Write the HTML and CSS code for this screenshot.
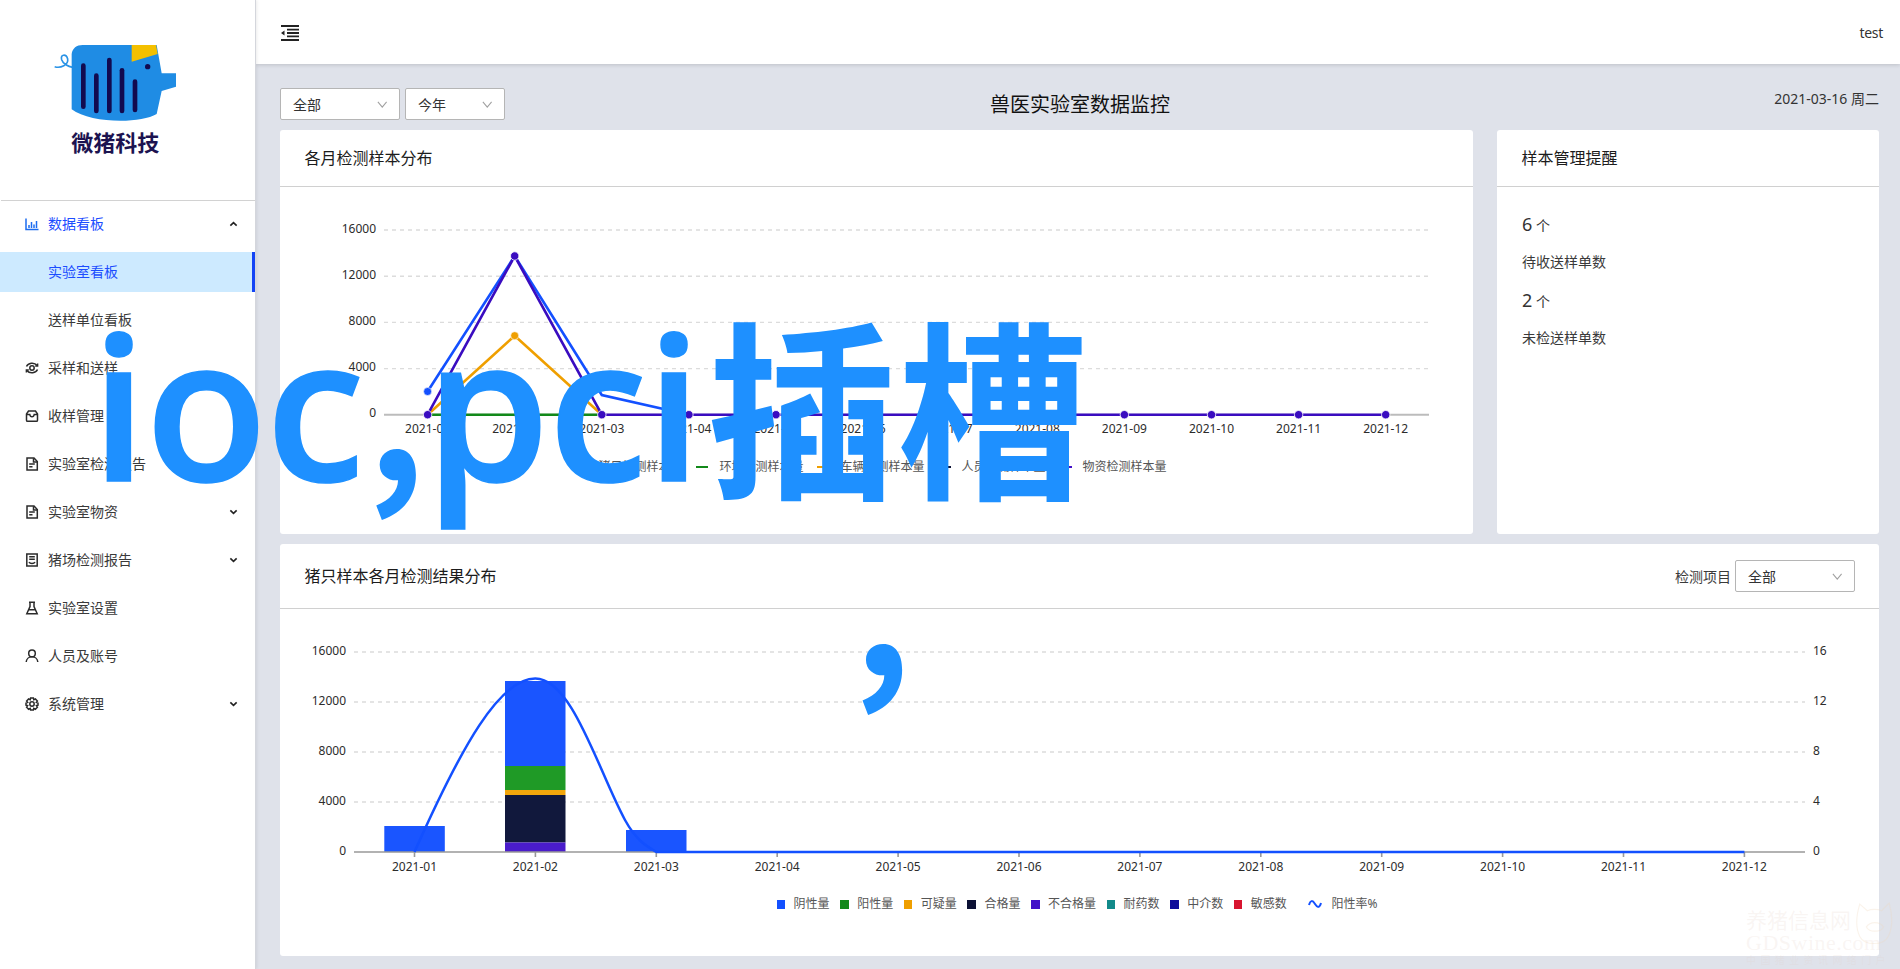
FILE: index.html
```html
<!DOCTYPE html>
<html lang="zh-CN">
<head>
<meta charset="utf-8">
<title>兽医实验室数据监控</title>
<link rel="stylesheet" href="styles.css">
</head>
<body>
<div class="app">
  <aside class="sidebar">
    <div class="logo">
      <svg class="logo-svg" viewBox="0 0 480 390" width="160" height="130">
        <path class="logo-tail" d="M44 110C62 116 86 104 83 87C79 71 60 72 65 89C69 101 84 110 98 112"/>
        <path class="logo-body" d="M95 72C97 55 110 45 128 45H350L365 130H408V170L365 183L350 252C300 282 150 280 95 238Z"/>
        <path class="logo-ear" d="M275 45H348L353 72L275 95Z"/>
        <circle class="logo-eye" cx="323" cy="110" r="8"/>
        <g class="logo-bars">
          <path d="M130 107V230"/><path d="M169 137V243"/><path d="M208 90V243"/><path d="M246 121V243"/><path d="M285 155V240"/>
        </g>
        <text class="logo-text" x="94" y="362">微猪科技</text>
      </svg>
    </div>
    <nav class="menu">
      <div class="menu-item active">
        <svg class="ico" viewBox="0 0 14 14"><path d="M1 1.5V12.5H13.5" /><path d="M4 11V8M6.5 11V5M9 11V7.5M11.5 11V4"/></svg>
        <span class="menu-label">数据看板</span>
        <svg class="chev dark" viewBox="0 0 10 6"><path d="M1.5 4.8L5 1.5L8.5 4.8"/></svg>
      </div>
      <div class="submenu">
        <div class="sub-item selected">实验室看板</div>
        <div class="sub-item">送样单位看板</div>
      </div>
      <div class="menu-item">
        <svg class="ico" viewBox="0 0 14 14"><circle cx="7" cy="7" r="2.2"/><path d="M1.5 5.5C3 2 9 .8 12.2 4.5M12.5 8.5C11 12 5 13.2 1.8 9.5"/><path d="M12.6 2.6V5H10.2M1.4 11.4V9H3.8"/></svg>
        <span class="menu-label">采样和送样</span>
      </div>
      <div class="menu-item">
        <svg class="ico" viewBox="0 0 14 14"><path d="M3.5 2H10.5L12.5 5V11.2C12.5 11.8 12 12.3 11.4 12.3H2.6C2 12.3 1.5 11.8 1.5 11.2V5Z"/><path d="M1.5 5.5H4.8C5 7 6 7.8 7 7.8C8 7.8 9 7 9.2 5.5H12.5"/></svg>
        <span class="menu-label">收样管理</span>
      </div>
      <div class="menu-item">
        <svg class="ico" viewBox="0 0 14 14"><path d="M2 1H9L12.3 4.5V13H2Z"/><path d="M8.5 1.2V5H12.2M4.2 7H9.8M4.2 9.8H7.5"/></svg>
        <span class="menu-label">实验室检测报告</span>
      </div>
      <div class="menu-item">
        <svg class="ico" viewBox="0 0 14 14"><path d="M2 1H9L12.3 4.5V13H2Z"/><path d="M8.5 1.2V5H12.2M4.2 7H9.8M4.2 9.8H7.5"/></svg>
        <span class="menu-label">实验室物资</span>
        <svg class="chev dark" viewBox="0 0 10 6"><path d="M1.5 1.2L5 4.5L8.5 1.2"/></svg>
      </div>
      <div class="menu-item">
        <svg class="ico" viewBox="0 0 14 14"><path d="M1.8 1H12.2V13H1.8Z"/><path d="M4.2 3.8H9.8M4.2 6.3H9.8M4 9C5 11 9 11 10 9"/></svg>
        <span class="menu-label">猪场检测报告</span>
        <svg class="chev dark" viewBox="0 0 10 6"><path d="M1.5 1.2L5 4.5L8.5 1.2"/></svg>
      </div>
      <div class="menu-item">
        <svg class="ico" viewBox="0 0 14 14"><path d="M4 1.2H10M5 1.2V5.5L1.8 12.8H12.2L9 5.5V1.2M3.6 8.8H10.4"/></svg>
        <span class="menu-label">实验室设置</span>
      </div>
      <div class="menu-item">
        <svg class="ico" viewBox="0 0 14 14"><circle cx="7" cy="4.4" r="3.3"/><path d="M1.2 13C1.4 9.8 4 7.8 7 7.8C10 7.8 12.6 9.8 12.8 13"/></svg>
        <span class="menu-label">人员及账号</span>
      </div>
      <div class="menu-item">
        <svg class="ico" viewBox="0 0 14 14"><circle cx="7" cy="7" r="2.2"/><path d="M5.6 1H8.4L8.8 2.7L10.4 2L12.4 4L11.4 5.4L13 6V8.2L11.4 8.6L12.4 10.2L10.4 12.2L8.8 11.3L8.4 13H5.6L5.2 11.3L3.6 12.2L1.6 10.2L2.6 8.6L1 8.2V6L2.6 5.4L1.6 4L3.6 2L5.2 2.7Z"/></svg>
        <span class="menu-label">系统管理</span>
        <svg class="chev dark" viewBox="0 0 10 6"><path d="M1.5 1.2L5 4.5L8.5 1.2"/></svg>
      </div>
    </nav>
  </aside>

  <div class="main">
    <header class="topbar">
      <svg class="fold" viewBox="0 0 18 16"><path d="M0 1H18M6 4.7H18M6 8H18M6 11.3H18M0 15H18"/><path class="fold-tri" d="M3.5 5.5V10.5L0 8Z"/></svg>
      <span class="user">test</span>
    </header>
    <main class="content">
      <div class="toolbar">
        <div class="filters">
          <div class="select w120"><span>全部</span><svg class="arrow" viewBox="0 0 12 8"><path d="M1 1L6 7L11 1"/></svg></div>
          <div class="select w100"><span>今年</span><svg class="arrow" viewBox="0 0 12 8"><path d="M1 1L6 7L11 1"/></svg></div>
        </div>
        <h1 class="page-title">兽医实验室数据监控</h1>
        <div class="date">2021-03-16 周二</div>
      </div>

      <div class="row-top">
        <section class="card">
          <div class="card-head short"><h2 class="card-title">各月检测样本分布</h2></div>
          <div class="chart-wrap">
            <svg class="chart chart-a" viewBox="280 187 1193 263">
              <g class="grid">
                <path d="M384 230H1429M384 276.2H1429M384 322.4H1429M384 368.6H1429"/>
              </g>
              <path class="axis light" d="M384 414.7H1429"/>
              <g class="ylabels">
                <text x="376" y="233">16000</text><text x="376" y="279">12000</text><text x="376" y="325">8000</text><text x="376" y="371">4000</text><text x="376" y="417">0</text>
              </g>
              <g class="xlabels">
                <text x="427.6" y="433">2021-01</text><text x="514.7" y="433">2021-02</text><text x="601.8" y="433">2021-03</text><text x="688.9" y="433">2021-04</text><text x="776" y="433">2021-05</text><text x="863.1" y="433">2021-06</text><text x="950.2" y="433">2021-07</text><text x="1037.3" y="433">2021-08</text><text x="1124.4" y="433">2021-09</text><text x="1211.5" y="433">2021-10</text><text x="1298.6" y="433">2021-11</text><text x="1385.7" y="433">2021-12</text>
              </g>
              <path class="ln green" d="M427.6 414.7H601.8"/>
              <path class="ln orange" d="M427.6 414.7L514.7 335.7L601.8 414.7"/>
              <circle class="dot-orange" cx="514.7" cy="335.7" r="4"/>
              <path class="ln blue" d="M427.6 391.5L514.7 256L601.8 395L688.9 414.7"/>
              <circle class="dot-blue" cx="427.6" cy="391.5" r="4"/>
              <path class="ln purple" d="M427.6 414.7L514.7 256L601.8 414.7H1385.7"/>
              <g class="dots">
                <circle cx="427.6" cy="414.7" r="4.2"/><circle cx="514.7" cy="256" r="4.2"/><circle cx="601.8" cy="414.7" r="4.2"/><circle cx="688.9" cy="414.7" r="4.2"/><circle cx="776" cy="414.7" r="4.2"/><circle cx="863.1" cy="414.7" r="4.2"/><circle cx="950.2" cy="414.7" r="4.2"/><circle cx="1037.3" cy="414.7" r="4.2"/><circle cx="1124.4" cy="414.7" r="4.2"/><circle cx="1211.5" cy="414.7" r="4.2"/><circle cx="1298.6" cy="414.7" r="4.2"/><circle cx="1385.7" cy="414.7" r="4.2"/>
              </g>
            </svg>
            <div class="legend legend-a">
              <div class="lg"><i class="mark-line c-blue"></i>猪只检测样本量</div>
              <div class="lg"><i class="mark-line c-green"></i>环境检测样本量</div>
              <div class="lg"><i class="mark-line c-orange"></i>车辆检测样本量</div>
              <div class="lg"><i class="mark-line c-navy"></i>人员检测样本量</div>
              <div class="lg"><i class="mark-line c-purple"></i>物资检测样本量</div>
            </div>
          </div>
        </section>
        <section class="card">
          <div class="card-head short"><h2 class="card-title">样本管理提醒</h2></div>
          <div class="stats">
            <div class="stat-num"><b>6</b> 个</div>
            <div class="stat-label">待收送样单数</div>
            <div class="stat-num"><b>2</b> 个</div>
            <div class="stat-label">未检送样单数</div>
          </div>
        </section>
      </div>

      <section class="card card-wide">
        <div class="card-head tall">
          <h2 class="card-title">猪只样本各月检测结果分布</h2>
          <div class="head-filter">
            <span class="filter-label">检测项目</span>
            <div class="select w120"><span>全部</span><svg class="arrow" viewBox="0 0 12 8"><path d="M1 1L6 7L11 1"/></svg></div>
          </div>
        </div>
        <svg class="chart chart-b" viewBox="280 609 1599 272">
          <g class="grid">
            <path d="M354 652H1805M354 702H1805M354 752H1805M354 802H1805"/>
          </g>
          <g class="ylabels">
            <text x="346" y="655">16000</text><text x="346" y="705">12000</text><text x="346" y="755">8000</text><text x="346" y="805">4000</text><text x="346" y="855">0</text>
          </g>
          <g class="rlabels">
            <text x="1813" y="655">16</text><text x="1813" y="705">12</text><text x="1813" y="755">8</text><text x="1813" y="805">4</text><text x="1813" y="855">0</text>
          </g>
          <g class="bars">
            <rect class="b-blue" x="384.3" y="826" width="60.5" height="26"/>
            <rect class="b-blue" x="505" y="681" width="60.5" height="85"/>
            <rect class="b-green" x="505" y="766" width="60.5" height="24"/>
            <rect class="b-orange" x="505" y="790" width="60.5" height="5"/>
            <rect class="b-navy" x="505" y="795" width="60.5" height="47.5"/>
            <rect class="b-purple" x="505" y="842.5" width="60.5" height="9.5"/>
            <rect class="b-blue" x="626" y="830" width="60.5" height="22"/>
          </g>
          <path class="axis dark" d="M354 852H1805M414.5 852V857M535.4 852V857M656.3 852V857M777.2 852V857M898.1 852V857M1019 852V857M1139.9 852V857M1260.8 852V857M1381.7 852V857M1502.6 852V857M1623.5 852V857M1744.4 852V857"/>
          <path class="ln curve" d="M414.5 852C462 745 500 678.5 535.3 678.5C572 678.5 598 770 625 820C636 840 646 846 656.3 852H1744.4"/>
          <g class="xlabels">
            <text x="414.5" y="871">2021-01</text><text x="535.4" y="871">2021-02</text><text x="656.3" y="871">2021-03</text><text x="777.2" y="871">2021-04</text><text x="898.1" y="871">2021-05</text><text x="1019" y="871">2021-06</text><text x="1139.9" y="871">2021-07</text><text x="1260.8" y="871">2021-08</text><text x="1381.7" y="871">2021-09</text><text x="1502.6" y="871">2021-10</text><text x="1623.5" y="871">2021-11</text><text x="1744.4" y="871">2021-12</text>
          </g>
        </svg>
        <div class="legend legend-b">
          <div class="lg"><i class="mark-sq c-blue"></i>阴性量</div>
          <div class="lg"><i class="mark-sq c-green"></i>阳性量</div>
          <div class="lg"><i class="mark-sq c-orange"></i>可疑量</div>
          <div class="lg"><i class="mark-sq c-navy"></i>合格量</div>
          <div class="lg"><i class="mark-sq c-purple"></i>不合格量</div>
          <div class="lg"><i class="mark-sq c-teal"></i>耐药数</div>
          <div class="lg"><i class="mark-sq c-indigo"></i>中介数</div>
          <div class="lg"><i class="mark-sq c-red"></i>敏感数</div>
          <div class="lg lg-rate"><svg class="mark-wave" viewBox="0 0 14 10"><path d="M1 6C2.5 1 4.5 1 7 5C9.5 9 11.5 9 13 4"/></svg>阳性率%</div>
        </div>
      </section>
    </main>
  </div>
</div>

<div class="banner"><span class="banner-latin">ioc</span><span class="banner-punct">,</span><span class="banner-latin">pci</span><span class="banner-cjk">插槽</span></div>
<div class="banner-comma">,</div>

<div class="watermark">
  <svg class="wm-cat" viewBox="0 0 40 48"><path d="M5 2L13 9C17 7 24 7 28 9L36 1C39 12 40 26 35 36C30 46 10 46 5 36C0 26 2 12 5 2Z"/><path d="M12 26C16 20 26 20 30 26C27 32 15 32 12 26Z"/></svg>
  <div class="wm-a">养猪信息网</div>
  <div class="wm-b">GDSwine.com</div>
  <div class="wm-c">中国猪业资讯网络门户</div>
</div>
</body>
</html>
```

FILE: styles.css
```css
* { box-sizing: border-box; }
html, body { margin: 0; height: 100%; }
body {
  width: 1900px;
  height: 969px;
  overflow: hidden;
  position: relative;
  font-family: "Noto Sans", "Noto Sans CJK SC", sans-serif;
  font-size: 14px;
  color: #333;
  background: #dfe2ea;
}
.app { display: flex; width: 1900px; height: 969px; }

/* sidebar */
.sidebar {
  width: 256px;
  flex: none;
  background: #fff;
  border-right: 1px solid #d4d6dc;
  box-shadow: 1px 0 3px rgba(0,0,0,.08);
  position: relative;
  z-index: 2;
}
.logo {
  height: 201px;
  padding: 30px 0 0 40px;
  border-bottom: 1px solid #d2d2d2;
  margin-left: 1px;
}
.logo-svg { display: block; margin-left: -1px; }
.logo-tail { fill: none; stroke: #2a93e6; stroke-width: 5; }
.logo-body { fill: #1f8ce4; }
.logo-ear { fill: #f4c000; }
.logo-eye { fill: #120a4f; }
.logo-bars path { stroke: #120a4f; stroke-width: 14; stroke-linecap: round; fill: none; }
.logo-text {
  font-family: "Noto Sans CJK SC", sans-serif;
  font-weight: 700;
  font-size: 66px;
  fill: #1c1350;
}
.menu { margin-top: -1px; }
.menu-item {
  height: 48px;
  display: flex;
  align-items: center;
  padding-left: 24.5px;
  position: relative;
  color: #3a3a3a;
}
.menu-item.active { color: #1c4dff; }
.ico {
  width: 14px;
  height: 14px;
  flex: none;
  margin-right: 9.5px;
  fill: none;
  stroke: #2b2b2b;
  stroke-width: 1.5;
}
.active .ico { stroke: #1c6cf0; }
.menu-label { line-height: 20px; }
.chev {
  position: absolute;
  left: 229px;
  top: 21px;
  width: 9px;
  height: 6px;
  fill: none;
  stroke: #222;
  stroke-width: 1.8;
}
.submenu { padding: 4px 0; display: flex; flex-direction: column; gap: 8px; }
.sub-item {
  height: 40px;
  line-height: 40px;
  padding-left: 48px;
  color: #3a3a3a;
}
.sub-item.selected {
  background: #cdeaff;
  color: #1c4dff;
  border-right: 3px solid #1343f5;
}

/* main */
.main { flex: 1; min-width: 0; display: flex; flex-direction: column; }
.topbar {
  height: 64px;
  flex: none;
  background: #fff;
  box-shadow: 0 1px 4px rgba(0,0,0,.15);
  display: flex;
  align-items: center;
  justify-content: space-between;
  padding: 0 17px 0 25px;
  position: relative;
  z-index: 1;
}
.fold { width: 18px; height: 16px; margin-top: 2px; fill: none; stroke: #222; stroke-width: 1.8; }
.fold-tri { fill: #222; stroke: none; }
.user { font-size: 14px; letter-spacing: -.3px; color: #333; }
.content { padding: 24px 20px 0 24px; flex: 1; }
.toolbar {
  display: grid;
  grid-template-columns: 1fr auto 1fr;
  height: 42px;
}
.filters { display: flex; gap: 5px; }
.select {
  height: 32px;
  background: #fff;
  border: 1px solid #b5b5b5;
  border-radius: 2px;
  display: flex;
  align-items: center;
  justify-content: space-between;
  padding: 0 12px;
  color: #333;
  font-size: 14px;
}
.w120 { width: 120px; }
.w100 { width: 100px; }
.arrow { width: 10.5px; height: 7px; fill: none; stroke: #a0a0a0; stroke-width: 1.2; }
.page-title {
  margin: 0;
  font-size: 20px;
  font-weight: 400;
  line-height: 34px;
  color: #111;
}
.date { text-align: right; font-size: 14px; line-height: 22px; color: #333; padding-right: 1px; }
.row-top { display: grid; grid-template-columns: 1193px 382px; gap: 24px; height: 404px; }
.card { background: #fff; border-radius: 3px; min-width: 0; }
.card-head {
  display: flex;
  align-items: center;
  justify-content: space-between;
  padding: 0 24px 2px 24.5px;
  border-bottom: 1px solid #d0d0d0;
}
.card-head.short { height: 57px; }
.card-head.tall { height: 65px; }
.card-title { margin: 0; font-size: 16px; font-weight: 400; color: #1c1c1c; }
.chart { display: block; }
.chart-a { width: 1193px; height: 263px; }
.chart-b { width: 1599px; height: 272px; }
.chart text { font-size: 12px; fill: #2c2c2c; }
.grid path { fill: none; stroke: #dcdcdc; stroke-width: 1.4; stroke-dasharray: 4 4; }
.axis { fill: none; }
.axis.light { stroke: #bcbcbc; stroke-width: 2; }
.axis.dark { stroke: #999; stroke-width: 1.6; }
.ylabels text { text-anchor: end; }
.xlabels text { text-anchor: middle; }
.ln { fill: none; stroke-width: 2.6; }
.ln.green { stroke: #12891a; }
.ln.orange { stroke: #ef9f00; }
.ln.blue { stroke: #1350ff; }
.ln.purple { stroke: #3a0cc0; }
.ln.curve { stroke: #1350ff; stroke-width: 2.5; }
.dot-orange { fill: #ef9f00; stroke: #fff; stroke-width: .6; }
.dot-blue { fill: #1350ff; stroke: #fff; stroke-width: .6; }
.dots circle { fill: #3a0cc0; stroke: #fff; stroke-width: .8; }
.b-blue { fill: #1a55ff; }
.b-green { fill: #1f9a26; }
.b-orange { fill: #f2a60c; }
.b-navy { fill: #11183c; }
.b-purple { fill: #4a1ccb; }
.legend {
  display: flex;
  justify-content: center;
  align-items: center;
  color: #555;
  font-size: 12px;
  line-height: 18px;
}
.legend-a { gap: 14px; margin-top: 8px; padding-right: 11px; }
.legend-b { gap: 10.6px; margin-top: 14px; padding-right: 5px; }
.lg { display: flex; align-items: center; white-space: nowrap; }
.mark-line { width: 12px; height: 2.5px; margin-right: 11px; flex: none; }
.mark-sq { width: 8.5px; height: 9px; margin-right: 8.5px; flex: none; }
.mark-wave { width: 14px; height: 10px; margin-right: 9px; fill: none; stroke: #1350ff; stroke-width: 2; }
.lg-rate { margin-left: 11px; }
.c-blue { background: #1350ff; }
.c-green { background: #12891a; }
.c-orange { background: #ef9f00; }
.c-navy { background: #0c1135; }
.c-purple { background: #4210c8; }
.c-teal { background: #128a8a; }
.c-indigo { background: #0e0c9a; }
.c-red { background: #d81530; }
.stats { padding: 18px 25px 0; }
.stat-num { font-size: 14px; line-height: 38px; height: 38px; color: #333; }
.stat-num b { font-size: 18px; font-weight: 400; }
.stat-label { font-size: 14px; line-height: 38px; height: 38px; color: #3a3a3a; }
.card-wide { width: 1599px; height: 412px; margin-top: 10px; }
.head-filter { display: flex; align-items: center; gap: 4px; margin-top: 2px; }
.filter-label { color: #3a3a3a; }

/* overlays */
.banner {
  position: absolute;
  left: 91px;
  top: 264px;
  white-space: nowrap;
  color: #1e90ff;
  line-height: 270px;
  z-index: 5;
}
.banner-latin {
  font-family: "Open Sans", sans-serif;
  font-weight: 600;
  font-size: 200px;
  letter-spacing: -1.5px;
  -webkit-text-stroke: 1.5px #1e90ff;
}
.banner-punct {
  font-family: "Noto Sans CJK SC", sans-serif;
  font-weight: 700;
  font-size: 180px;
  margin-left: 3px;
}
.banner-cjk {
  font-family: "Noto Sans CJK SC", sans-serif;
  font-weight: 700;
  font-size: 190px;
  margin-left: 7px;
  position: relative;
  top: 3px;
}
.banner-comma {
  position: absolute;
  left: 853px;
  top: 463px;
  color: #1e90ff;
  font-family: "Noto Sans CJK SC", sans-serif;
  font-size: 180px;
  font-weight: 700;
  line-height: 270px;
  z-index: 5;
}
.watermark {
  position: absolute;
  left: 1746px;
  top: 908px;
  width: 150px;
  color: rgba(225,205,195,.2);
  z-index: 6;
  white-space: nowrap;
}
.wm-cat {
  position: absolute;
  left: 109px;
  top: -6px;
  width: 38px;
  height: 46px;
  fill: none;
  stroke: rgba(240,215,190,.3);
  stroke-width: 1.2;
}
.wm-a { font-size: 21px; line-height: 25px; }
.wm-b { font-family: "Liberation Serif", serif; font-size: 22px; line-height: 20px; letter-spacing: .5px; }
.wm-c { font-size: 10px; line-height: 14px; letter-spacing: 4.4px; }
```
